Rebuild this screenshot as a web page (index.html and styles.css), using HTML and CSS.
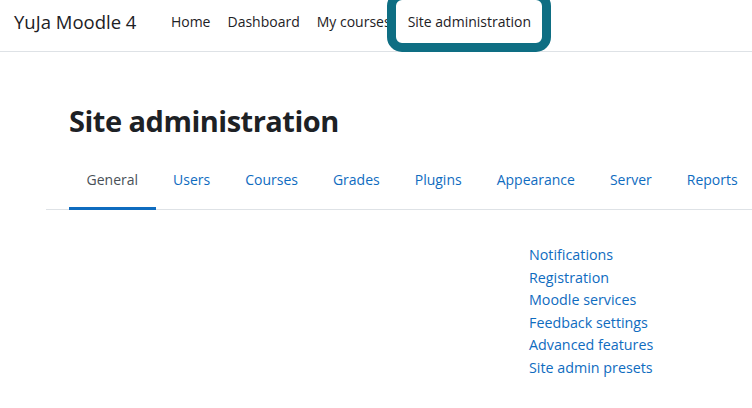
FILE: index.html
```html
<!DOCTYPE html>
<html>
  <head>
    <title>Site administration | YuJa Moodle 4</title>
    <meta name="viewport" content="width=device-width, initial-scale=1.0">
    <link rel="stylesheet" href="styles.css">
  </head>
  <body>
    <nav class="navbar">
      <a class="brand" href="#">YuJa Moodle 4</a>
      <ul class="primary-nav">
        <li><a href="#">Home</a></li>
        <li><a href="#">Dashboard</a></li>
        <li><a href="#">My courses</a></li>
        <li class="marked"><a href="#">Site administration</a></li>
      </ul>
    </nav>
    <main class="page">
      <h1>Site administration</h1>
      <ul class="tabs">
        <li class="active"><a href="#">General</a></li>
        <li><a href="#">Users</a></li>
        <li><a href="#">Courses</a></li>
        <li><a href="#">Grades</a></li>
        <li><a href="#">Plugins</a></li>
        <li><a href="#">Appearance</a></li>
        <li><a href="#">Server</a></li>
        <li><a href="#">Reports</a></li>
      </ul>
      <ul class="links">
        <li><a href="#">Notifications</a></li>
        <li><a href="#">Registration</a></li>
        <li><a href="#">Moodle services</a></li>
        <li><a href="#">Feedback settings</a></li>
        <li><a href="#">Advanced features</a></li>
        <li><a href="#">Site admin presets</a></li>
      </ul>
    </main>
  </body>
</html>
```

FILE: styles.css
```css
* {
  margin: 0;
  padding: 0;
  box-sizing: border-box;
}
body {
  font-family: "Open Sans", "Noto Sans", sans-serif;
  color: #1d2125;
  background: #fff;
  overflow: hidden;
}
a {
  text-decoration: none;
  color: inherit;
}
ul {
  list-style: none;
}

.navbar {
  display: flex;
  align-items: center;
  height: 52px;
  padding: 0 0 8px 14px;
  border-bottom: 1px solid #dee2e6;
}
.brand {
  font-size: 18.5px;
  margin-right: 26px;
}
.primary-nav {
  display: flex;
  font-size: 14px;
}
.primary-nav a {
  display: block;
  padding: 0 8.5px;
}
.primary-nav .marked {
  position: relative;
}
/* callout ring round the current item */
.primary-nav .marked::after {
  content: "";
  position: absolute;
  left: -12px;
  right: -12px;
  top: -21px;
  bottom: -21px;
  border: 9px solid #0e6e83;
  border-radius: 15px;
}

.page {
  padding-left: 46px;
}
h1 {
  margin: 51px 0 0 23px;
  font-size: 29px;
  font-weight: 700;
  line-height: 36px;
  letter-spacing: -0.5px;
}
.tabs {
  display: flex;
  margin-top: 13px;
  padding-left: 23px;
  border-bottom: 1px solid #dee2e6;
  font-size: 14px;
}
.tabs a {
  display: block;
  padding: 0 17.5px;
  line-height: 55px;
  color: #0f6cbf;
  border-bottom: 3px solid transparent;
  margin-bottom: -1px;
}
.tabs .active a {
  color: #495057;
  border-bottom-color: #0f6cbf;
}

.links {
  margin: 34px 0 0 483px;
  font-size: 14.3px;
  line-height: 22.6px;
}
.links a {
  color: #0f6cbf;
}
```
